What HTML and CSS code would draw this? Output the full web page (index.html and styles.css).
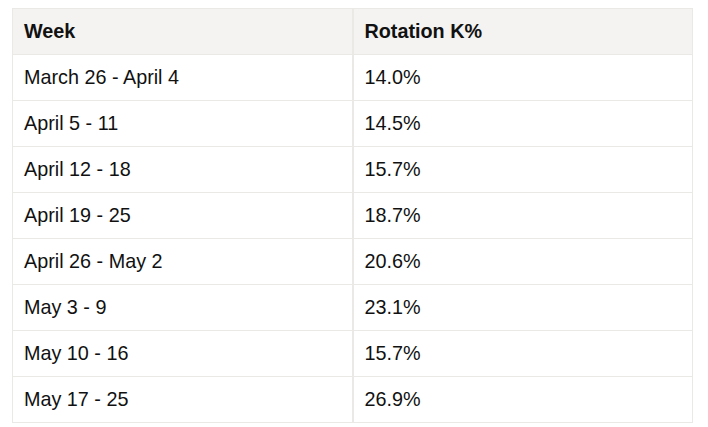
FILE: index.html
```html
<!DOCTYPE html>
<html>
<head>
<meta charset="utf-8">
<link rel="stylesheet" href="styles.css">
</head>
<body>
<table class="data">
  <thead>
    <tr><th>Week</th><th>Rotation K%</th></tr>
  </thead>
  <tbody>
    <tr><td>March 26 - April 4</td><td>14.0%</td></tr>
    <tr><td>April 5 - 11</td><td>14.5%</td></tr>
    <tr><td>April 12 - 18</td><td>15.7%</td></tr>
    <tr><td>April 19 - 25</td><td>18.7%</td></tr>
    <tr><td>April 26 - May 2</td><td>20.6%</td></tr>
    <tr><td>May 3 - 9</td><td>23.1%</td></tr>
    <tr><td>May 10 - 16</td><td>15.7%</td></tr>
    <tr><td>May 17 - 25</td><td>26.9%</td></tr>
  </tbody>
</table>
</body>
</html>
```
FILE: styles.css
```css
html, body {
  margin: 0;
  padding: 0;
  background: #ffffff;
}
body {
  padding: 8px 0 0 12px;
  font-family: "Liberation Sans", Arial, sans-serif;
  color: #111111;
}
.data {
  width: 681px;
  border-collapse: collapse;
  table-layout: fixed;
  border: 1px solid #ebe9e6;
  font-size: 19.8px;
}
.data th,
.data td {
  height: 46px;
  padding: 0 11px;
  text-align: left;
  vertical-align: middle;
  border: 1px solid #ebe9e6;
  box-sizing: border-box;
}
.data th {
  background: #f4f3f1;
  font-weight: bold;
}
.data th + th,
.data td + td {
  border-left-width: 2px;
}
```
